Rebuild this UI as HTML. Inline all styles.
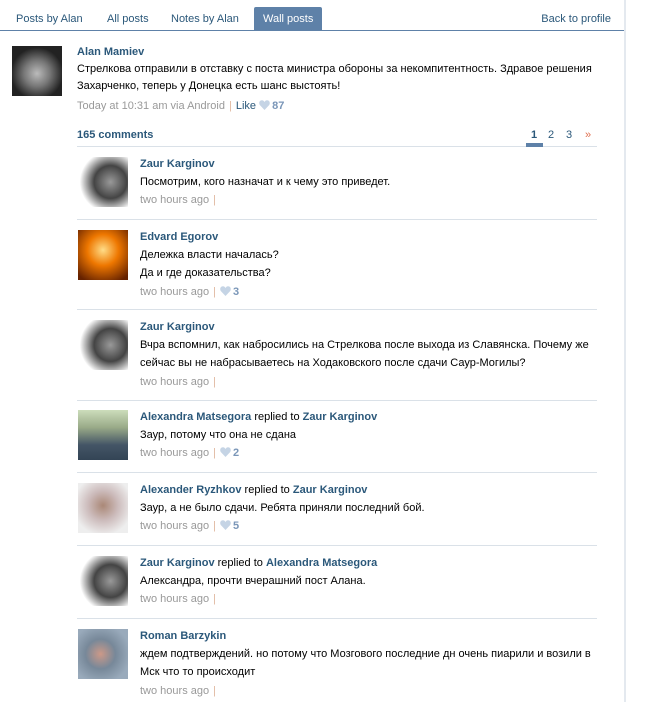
<!DOCTYPE html><html><head><meta charset="utf-8"><style>
body{margin:0;width:653px;height:702px;background:#fff;font-family:Tahoma,"Liberation Sans","DejaVu Sans",sans-serif;font-size:11px;position:relative;overflow:hidden;color:#000}
.a{position:absolute}
.tab{position:absolute;top:13px;color:#2b587a;white-space:nowrap}
.n{color:#2b587a;font-weight:bold}
.m{color:#999}
.p{color:#e0b8a0;margin:0 4px}
.h{display:inline-block;width:11px;height:10px;vertical-align:-1px;margin-right:2px}
.c{color:#7a96b8;font-weight:bold}
.sep{position:absolute;left:77px;width:520px;height:1px;background:#dae1e8}
.av{position:absolute;width:50px;height:50px;left:78px}
.t{position:absolute;left:140px;line-height:17px;white-space:nowrap}
</style></head><body>
<svg width="0" height="0" style="position:absolute"><symbol id="hr" viewBox="0 0 11 10"><path d="M5.5 10 L1 5.2 C-0.6 3.4 0.4 0.3 2.9 0.3 C4.2 0.3 5 1.2 5.5 2 C6 1.2 6.8 0.3 8.1 0.3 C10.6 0.3 11.6 3.4 10 5.2 Z" fill="#c5d4e5"/></symbol></svg>
<div class="a" style="left:624px;top:0;width:2px;height:702px;background:#e4e9ef"></div>
<div class="a" style="left:0;top:30px;width:624px;height:1px;background:#5e81a8"></div>
<div class="a" style="left:254px;top:7px;width:68px;height:24px;background:#5e81a8;border-radius:2px 2px 0 0"></div>
<div class="tab" style="left:16px">Posts by Alan</div>
<div class="tab" style="left:107px">All posts</div>
<div class="tab" style="left:171px">Notes by Alan</div>
<div class="tab" style="left:263px;color:#fff">Wall posts</div>
<div class="tab" style="left:434px;width:177px;text-align:right">Back to profile</div>

<div class="a" style="left:12px;top:46px;width:50px;height:50px;background:radial-gradient(circle at 50% 55%,#bbb 0,#777 35%,#222 70%)"></div>
<div class="a" style="left:77px;top:44px;line-height:17px;white-space:nowrap"><span class="n">Alan Mamiev</span><br>Стрелкова отправили в отставку с поста министра обороны за некомпитентность. Здравое решения<br>Захарченко, теперь у Донецка есть шанс выстоять!<br><span style="line-height:22px"><span class="m">Today at 10:31 am via Android</span><span class="p">|</span><span style="color:#2b587a">Like</span> <svg class="h"><use href="#hr"/></svg><span class="c">87</span></span></div>
<div class="a n" style="left:77px;top:129px">165 comments</div>
<div class="a" style="left:531px;top:129px;color:#2b587a;font-weight:bold">1</div>
<div class="a" style="left:548px;top:129px;color:#2b587a">2</div>
<div class="a" style="left:566px;top:129px;color:#2b587a">3</div>
<div class="a" style="left:585px;top:129px;color:#e07050">»</div>
<div class="sep" style="top:146px"></div>
<div class="a" style="left:526px;top:143px;width:17px;height:4px;background:#5e81a8"></div>

<div class="av" style="top:157px;background:radial-gradient(circle at 65% 50%,#999 0,#444 40%,#fff 75%)"></div>
<div class="t" style="top:156px"><span class="n">Zaur Karginov</span><br><span style="line-height:19px">Посмотрим, кого назначат и к чему это приведет.</span><br><span class="m">two hours ago</span><span class="p">|</span></div>
<div class="sep" style="top:219px"></div>

<div class="av" style="top:230px;background:radial-gradient(circle at 50% 40%,#fd8 0,#e70 40%,#620 90%)"></div>
<div class="t" style="top:229px"><span class="n">Edvard Egorov</span><br><span style="line-height:19px">Дележка власти началась?</span><br>Да и где доказательства?<br><span style="line-height:21px"><span class="m">two hours ago</span><span class="p">|</span><svg class="h"><use href="#hr"/></svg><span class="c">3</span></span></div>
<div class="sep" style="top:309px"></div>

<div class="av" style="top:320px;background:radial-gradient(circle at 65% 50%,#999 0,#444 40%,#fff 75%)"></div>
<div class="t" style="top:319px"><span class="n">Zaur Karginov</span><br><span style="line-height:19px">Вчра вспомнил, как набросились на Стрелкова после выхода из Славянска. Почему же</span><br>сейчас вы не набрасываетесь на Ходаковского после сдачи Саур-Могилы?<br><span style="line-height:21px"><span class="m">two hours ago</span><span class="p">|</span></span></div>
<div class="sep" style="top:400px"></div>

<div class="av" style="top:410px;background:linear-gradient(#cdb 0,#9a8 35%,#456 70%,#345)"></div>
<div class="t" style="top:409px"><span class="n">Alexandra Matsegora</span> replied to <span class="n">Zaur Karginov</span><br><span style="line-height:19px">Заур, потому что она не сдана</span><br><span class="m">two hours ago</span><span class="p">|</span><svg class="h"><use href="#hr"/></svg><span class="c">2</span></div>
<div class="sep" style="top:472px"></div>

<div class="av" style="top:483px;background:radial-gradient(circle at 50% 45%,#a87 0,#cbb 40%,#eee 80%)"></div>
<div class="t" style="top:482px"><span class="n">Alexander Ryzhkov</span> replied to <span class="n">Zaur Karginov</span><br><span style="line-height:19px">Заур, а не было сдачи. Ребята приняли последний бой.</span><br><span class="m">two hours ago</span><span class="p">|</span><svg class="h"><use href="#hr"/></svg><span class="c">5</span></div>
<div class="sep" style="top:545px"></div>

<div class="av" style="top:556px;background:radial-gradient(circle at 65% 50%,#999 0,#444 40%,#fff 75%)"></div>
<div class="t" style="top:555px"><span class="n">Zaur Karginov</span> replied to <span class="n">Alexandra Matsegora</span><br><span style="line-height:19px">Александра, прочти вчерашний пост Алана.</span><br><span class="m">two hours ago</span><span class="p">|</span></div>
<div class="sep" style="top:618px"></div>

<div class="av" style="top:629px;background:radial-gradient(circle at 45% 50%,#c98 0,#789 40%,#9ab 80%)"></div>
<div class="t" style="top:628px"><span class="n">Roman Barzykin</span><br><span style="line-height:19px">ждем подтверждений. но потому что Мозгового последние дн очень пиарили и возили в</span><br>Мск что то происходит<br><span style="line-height:21px"><span class="m">two hours ago</span><span class="p">|</span></span></div>
</body></html>
